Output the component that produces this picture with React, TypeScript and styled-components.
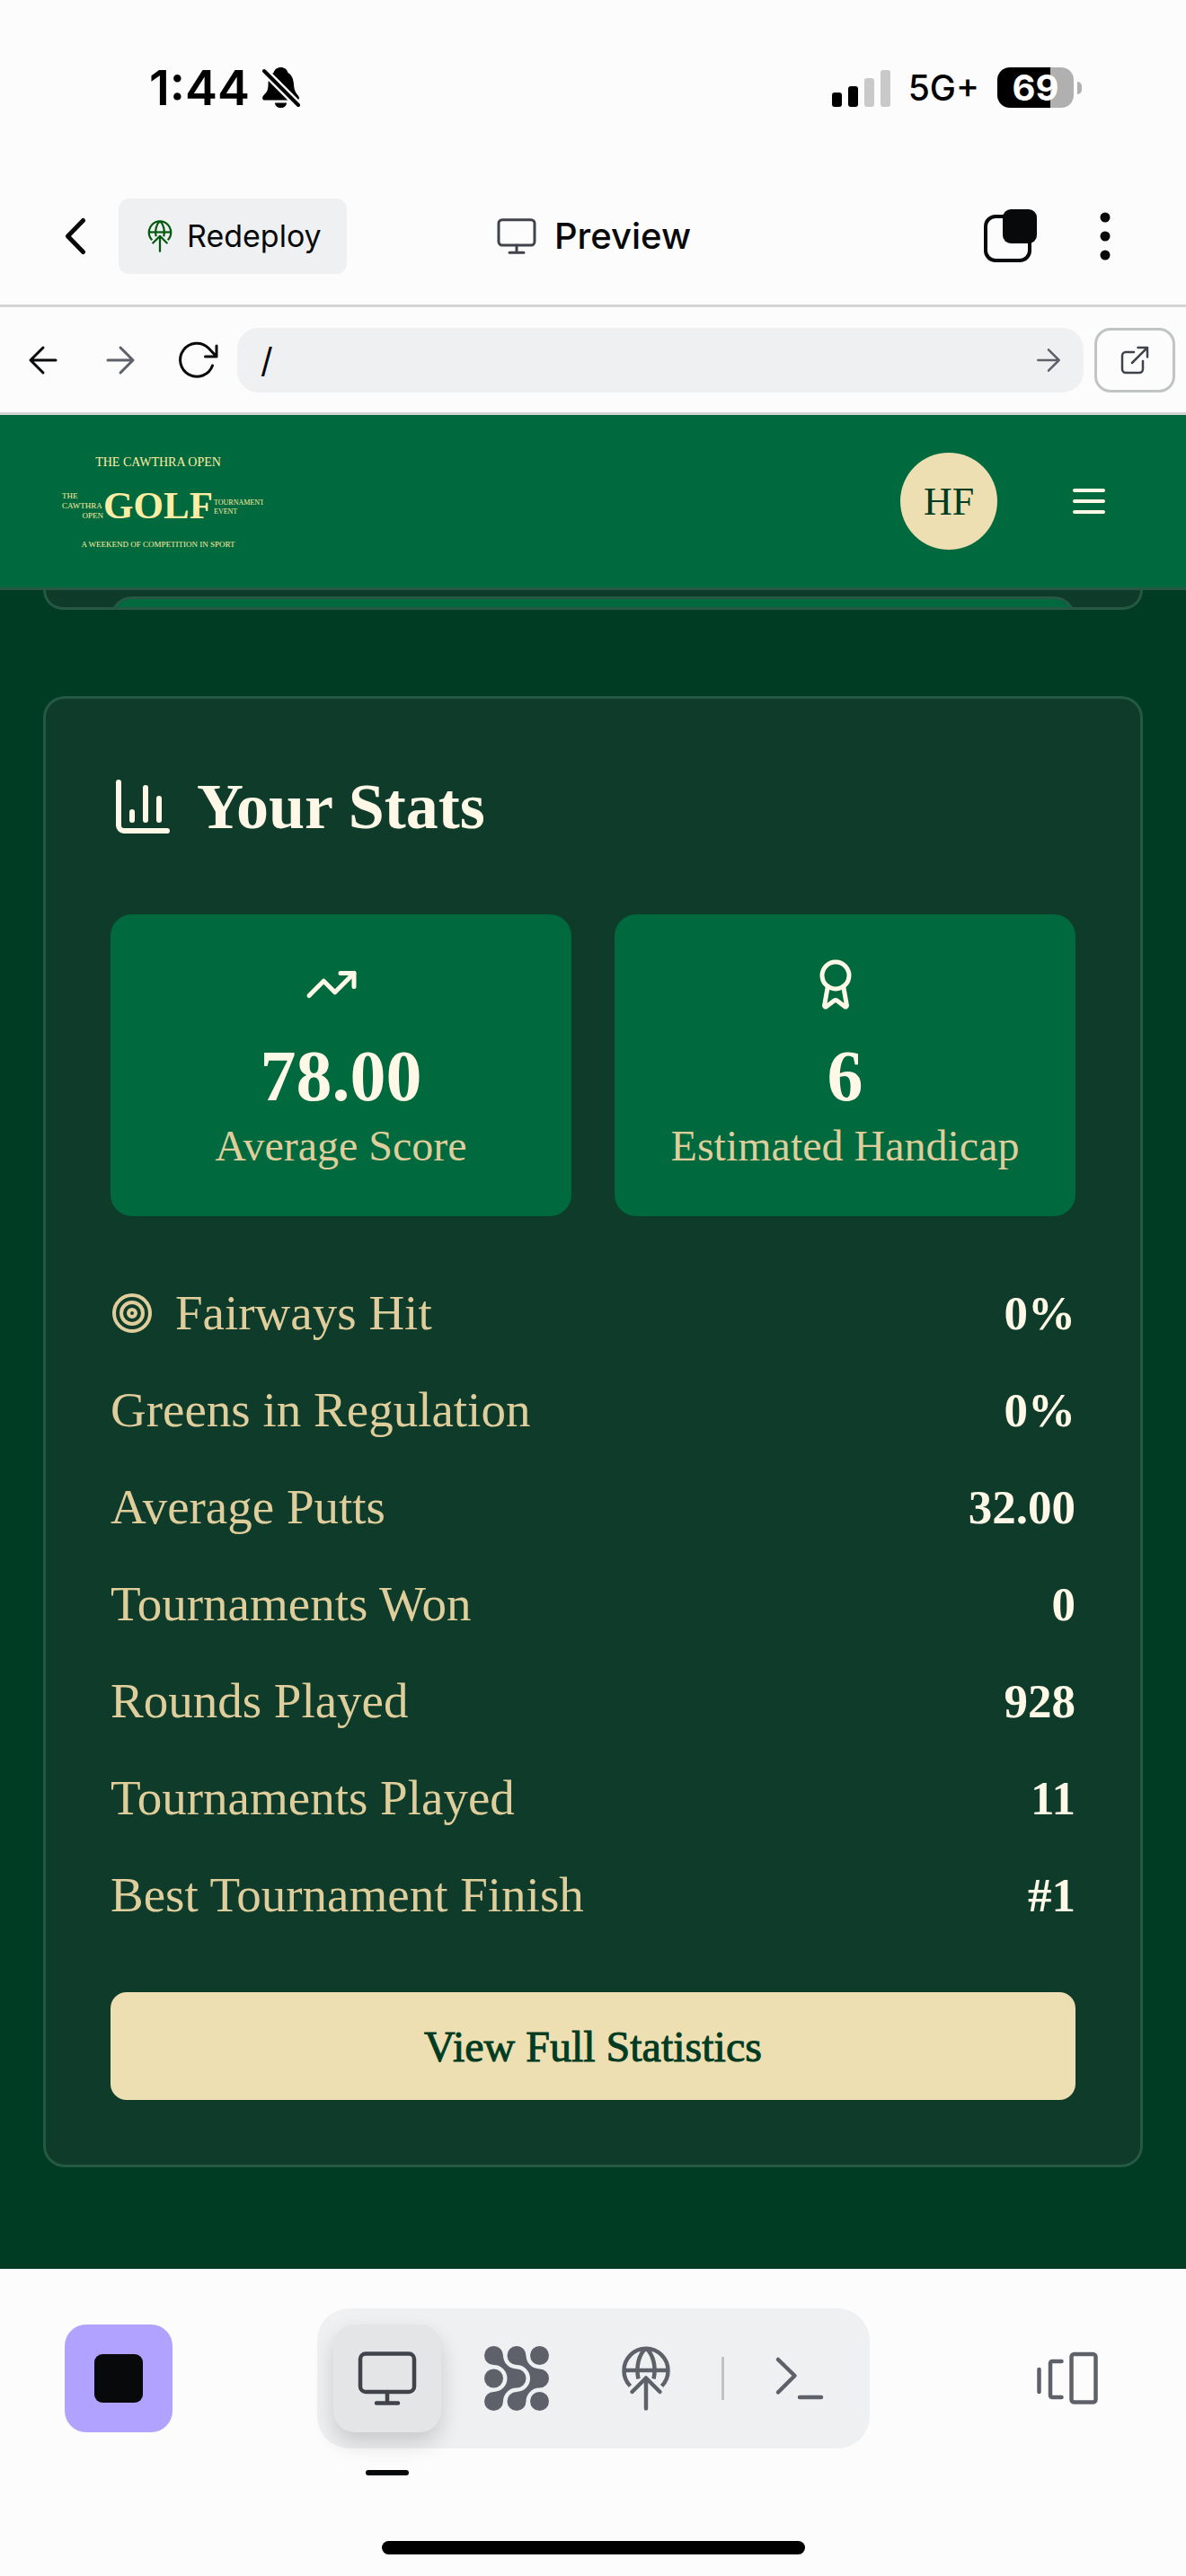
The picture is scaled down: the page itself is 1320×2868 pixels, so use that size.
import React from "react";
import styled, { createGlobalStyle } from "styled-components";
import { Award, ChartColumn, Target, TrendingUp } from "lucide-react";

const sans = `Inter, "Liberation Sans", sans-serif`;
const serif = `"Liberation Serif", "Times New Roman", serif`;

const color = {
  chrome: "#fcfcfc",
  chromeSoft: "#eff0f2",
  chromeLine: "#d3d4d4",
  ink: "#07090b",
  inkMid: "#41434a",
  inkSoft: "#5f616a",
  green: "#00693e",
  page: "#003c23",
  card: "#0f3c2a",
  line: "#255943",
  cream: "#fff8e7",
  sand: "#dfcd9b",
  gold: "#eedfb2",
};

const GlobalStyle = createGlobalStyle`
  *, *::before, *::after { box-sizing: border-box; }
  body { margin: 0; background: ${color.chrome}; }
  button, input { font: inherit; color: inherit; }
  svg { display: block; flex: none; }
`;

const Page = styled.div`
  display: flex;
  flex-direction: column;
  min-height: 100vh;
  font-family: ${sans};
  color: ${color.ink};
`;

/* ---------- phone status bar ---------- */

const StatusBar = styled.div`
  display: flex;
  justify-content: space-between;
  align-items: center;
  height: 187px;
  padding: 8px 116px 0 166px;
  color: #000;
`;

const StatusGroup = styled.div<{ $gap: number }>`
  display: flex;
  align-items: center;
  gap: ${(p) => p.$gap}px;
`;

const Clock = styled.span`
  font-size: 54px;
  font-weight: 600;
  line-height: 60px;
`;

const Network = styled.span`
  font-size: 39px;
  font-weight: 500;
  line-height: 60px;
`;

const Battery = styled.div`
  display: flex;
  align-items: center;
  gap: 4px;

  &::after {
    content: "";
    width: 5px;
    height: 14px;
    border-radius: 0 7px 7px 0;
    background: #b0b0b0;
  }
`;

const BatteryBody = styled.div`
  display: grid;
  place-items: center;
  width: 85px;
  height: 45px;
  border-radius: 14px;
  background: linear-gradient(90deg, #000 69%, #b0b0b0 69%);
  color: #fff;
  font-size: 40px;
  font-weight: 700;
  line-height: 45px;
`;

/* ---------- editor header ---------- */

const IconButton = styled.button<{ $w: number; $h: number }>`
  display: grid;
  place-items: center;
  width: ${(p) => p.$w}px;
  height: ${(p) => p.$h}px;
  padding: 0;
  border: 0;
  background: none;
  cursor: pointer;
`;

const EditorHeader = styled.header`
  display: grid;
  grid-template-columns: 1fr auto 1fr;
  align-items: center;
  height: 155px;
  padding: 0 54px;
  border-bottom: 3px solid ${color.chromeLine};
`;

const HeaderSide = styled.div<{ $end?: boolean; $gap: number }>`
  display: flex;
  align-items: center;
  justify-content: ${(p) => (p.$end ? "flex-end" : "flex-start")};
  gap: ${(p) => p.$gap}px;
`;

const RedeployButton = styled.button`
  display: flex;
  align-items: center;
  gap: 12px;
  height: 84px;
  padding: 0 28px;
  border: 0;
  border-radius: 12px;
  background: ${color.chromeSoft};
  font-size: 34px;
  line-height: 48px;
  cursor: pointer;
`;

const HeaderTitle = styled.h1`
  display: flex;
  align-items: center;
  gap: 18px;
  margin: 0;
  font-size: 40px;
  font-weight: 500;
  line-height: 48px;
`;

const AddressRow = styled.form`
  display: flex;
  align-items: center;
  gap: 2px;
  height: 120px;
  padding: 0 12px 0 6px;
  border-bottom: 3px solid ${color.chromeLine};
`;

const NavButtons = styled.div`
  display: flex;
  gap: 2px;
`;

const AddressField = styled.label`
  display: flex;
  flex: 1;
  align-items: center;
  min-width: 0;
  height: 72px;
  padding: 0 6px 0 26px;
  border-radius: 24px;
  background: ${color.chromeSoft};
`;

const AddressInput = styled.input`
  flex: 1;
  min-width: 0;
  padding: 0;
  border: 0;
  outline: 0;
  background: none;
  font-size: 38px;
  line-height: 48px;
`;

const OpenLink = styled.a`
  display: grid;
  place-items: center;
  width: 90px;
  height: 72px;
  margin-left: 10px;
  border: 3px solid #c0c4c3;
  border-radius: 18px;
  color: ${color.inkMid};
`;

/* ---------- previewed site ---------- */

const SiteHeader = styled.header`
  display: flex;
  align-items: center;
  justify-content: space-between;
  height: 195px;
  padding: 0 48px 0 69px;
  border-bottom: 3px solid ${color.line};
  background: ${color.green};
  color: ${color.cream};
`;

const SiteActions = styled.div`
  display: flex;
  align-items: center;
  gap: 42px;
`;

const Avatar = styled.button`
  width: 108px;
  height: 108px;
  padding: 0;
  border: 0;
  border-radius: 50%;
  background: ${color.gold};
  color: ${color.page};
  font-family: ${serif};
  font-size: 44px;
  cursor: pointer;
`;

const SiteMain = styled.main`
  display: flex;
  flex: 1;
  flex-direction: column;
  gap: 96px;
  padding: 0 48px 113px;
  background: ${color.page};
  font-family: ${serif};
`;

const PreviousCard = styled.section`
  height: 22px;
  padding: 7px 72px 0;
  overflow: hidden;
  border: 3px solid ${color.line};
  border-top: 0;
  border-radius: 0 0 24px 24px;
  background: ${color.card};
`;

const PreviousPanel = styled.div`
  height: 48px;
  border: 3px solid ${color.line};
  border-radius: 24px;
  background: ${color.green};
`;

const StatsCard = styled.section`
  display: flex;
  flex-direction: column;
  gap: 72px;
  padding: 72px;
  border: 3px solid ${color.line};
  border-radius: 24px;
  background: ${color.card};
  color: ${color.cream};
`;

const CardTitle = styled.h2`
  display: flex;
  align-items: center;
  gap: 24px;
  margin: 0;
  font-size: 72px;
  font-weight: 700;
  line-height: 96px;
`;

const Tiles = styled.div`
  display: grid;
  grid-template-columns: 1fr 1fr;
  gap: 48px;
`;

const Tile = styled.div`
  display: flex;
  flex-direction: column;
  align-items: center;
  padding: 48px;
  border-radius: 24px;
  background: ${color.green};
  white-space: nowrap;

  svg {
    margin: 0 21px 24px 0;
  }
`;

const TileValue = styled.strong`
  font-size: 80px;
  line-height: 96px;
`;

const TileLabel = styled.span`
  color: ${color.sand};
  font-size: 48px;
  line-height: 60px;
`;

const StatList = styled.dl`
  display: flex;
  flex-direction: column;
  gap: 36px;
  margin: 0;
  font-size: 55px;
  line-height: 72px;
`;

const StatRow = styled.div`
  display: flex;
  justify-content: space-between;
`;

const StatName = styled.dt`
  display: flex;
  align-items: center;
  gap: 24px;
  color: ${color.sand};
`;

const StatValue = styled.dd`
  margin: 0;
  font-size: 53px;
  font-weight: 700;
`;

const PrimaryButton = styled.button`
  height: 120px;
  border: 0;
  border-radius: 18px;
  background: ${color.gold};
  color: ${color.page};
  font-size: 48px;
  -webkit-text-stroke: 1px currentColor;
  cursor: pointer;
`;

/* ---------- editor dock ---------- */

const Dock = styled.footer`
  display: flex;
  flex-direction: column;
  align-items: center;
  gap: 103px;
  padding: 44px 72px 24px;
  background: ${color.chrome};
  color: ${color.inkSoft};
`;

const DockRow = styled.div`
  display: flex;
  align-items: center;
  justify-content: space-between;
  align-self: stretch;
`;

const StopButton = styled(IconButton)`
  border-radius: 24px;
  background: #b1a2ff;

  &::before {
    content: "";
    width: 54px;
    height: 54px;
    border-radius: 9px;
    background: ${color.ink};
  }
`;

const ToolTabs = styled.nav`
  display: flex;
  align-items: center;
  gap: 24px;
  padding: 18px;
  border-radius: 36px;
  background: ${color.chromeSoft};
`;

const ToolTab = styled(IconButton)<{ $active?: boolean }>`
  position: relative;
  border-radius: 24px;
  ${(p) =>
    p.$active &&
    `
    background: #e4e5e7;
    color: ${color.inkMid};
    box-shadow: 0 12px 24px rgba(0, 0, 0, 0.16);

    &::after {
      content: "";
      position: absolute;
      top: 162px;
      left: 36px;
      width: 48px;
      height: 6px;
      border-radius: 3px;
      background: ${color.ink};
    }
  `}
`;

const Divider = styled.span`
  width: 3px;
  height: 48px;
  background: #c0c2c5;
`;

const HomeIndicator = styled.div`
  width: 471px;
  height: 15px;
  border-radius: 8px;
  background: #000;
`;

/* ---------- icons ---------- */

type IconProps = { size: number; color?: string };

const line = {
  fill: "none",
  stroke: "currentColor",
  strokeLinecap: "round" as const,
  strokeLinejoin: "round" as const,
};

const BellOff = () => (
  <svg width="42" height="45" viewBox="0 0 42 45" aria-hidden="true">
    <path d="M20.500 0c-4 0-7 2.300-8 6-4.500 2.500-6 8-6 13 0 8-2.500 9-5 12-2.500 3-1.500 5.500 1.500 5.500h35c3 0 4-2.500 1.500-5.500-2.500-3-4-5-4.500-12-.5-6-2-10.500-6.500-13-1-3.700-4-6-8-6z" />
    <path d="M14 39.500h13c0 3.500-3 5.500-6.500 5.500s-6.500-2-6.500-5.500z" />
    <path d="M2 4l38 38" stroke={color.chrome} strokeWidth="9" />
    <path d="M2 4l38 38" stroke="#000" strokeWidth="4" strokeLinecap="round" />
  </svg>
);

const Signal = () => (
  <svg width="65" height="42" viewBox="0 0 65 42" aria-hidden="true">
    <rect x="0" y="26" width="11" height="16" rx="3" />
    <rect x="18" y="19" width="11" height="23" rx="3" />
    <rect x="36" y="10" width="11" height="32" rx="3" fill="#c9c9c9" />
    <rect x="54" y="1" width="11" height="41" rx="3" fill="#c9c9c9" />
  </svg>
);

const ChevronLeft = () => (
  <svg width="48" height="48" viewBox="0 0 48 48" {...line} strokeWidth="5">
    <path d="M32.500 6.500L15.500 24l17 17.500" />
  </svg>
);

const Globe = ({ size, color: c }: IconProps) => (
  <svg width={size} height={size} viewBox="0 0 72 72" {...line} strokeWidth="4.500" color={c}>
    <g strokeLinecap="butt">
      <path d="M18.500 44.500A24.500 24.500 0 1 1 53.500 44.500" />
      <path d="M11.500 27h49" />
      <path d="M36 2.500C28 9 24.500 23 27.500 36.500M36 2.500C44 9 47.500 23 44.500 36.500" />
    </g>
    <path d="M20.500 51L36 35.500L51.500 51M36 36v33.500" />
  </svg>
);

const Monitor = ({ size, color: c }: IconProps) => (
  <svg width={size} height={size} viewBox="0 0 72 72" {...line} strokeWidth="4.500" color={c}>
    <rect x="6" y="8.500" width="60" height="42.500" rx="6" />
    <path d="M36 51v12.500M24 63.500h24" />
  </svg>
);

const Tabs = () => (
  <svg width="60" height="60" viewBox="0 0 60 60">
    <rect x="2" y="8" width="49" height="49" rx="11" {...line} strokeWidth="4" />
    <rect x="21" y="0" width="38" height="38" rx="9" fill="currentColor" />
  </svg>
);

const Dots = () => (
  <svg width="12" height="54" viewBox="0 0 12 54" fill="currentColor">
    <circle cx="6" cy="6" r="5.500" />
    <circle cx="6" cy="27" r="5.500" />
    <circle cx="6" cy="48" r="5.500" />
  </svg>
);

const ArrowLeft = () => (
  <svg width="48" height="48" viewBox="0 0 48 48" {...line} strokeWidth="3">
    <path d="M38 24H10M24 10L10 24l14 14" />
  </svg>
);

const ArrowRight = ({ size, color: c }: IconProps) => (
  <svg width={size} height={size} viewBox="0 0 48 48" {...line} strokeWidth="3" color={c}>
    <path d="M10 24h28M24 10l14 14-14 14" />
  </svg>
);

const Reload = () => (
  <svg width="48" height="48" viewBox="0 0 48 48" {...line} strokeWidth="3">
    <path d="M40.500 30A18.500 18.500 0 1 1 36 10.500L45 20M45 8v12H32.500" />
  </svg>
);

const External = () => (
  <svg width="36" height="36" viewBox="0 0 36 36" {...line} strokeWidth="2.500">
    <path d="M17 9H8a4 4 0 0 0-4 4v15a4 4 0 0 0 4 4h15a4 4 0 0 0 4-4v-9M15 21L32 4M21.500 4H32v10.500" />
  </svg>
);

const MenuIcon = () => (
  <svg width="48" height="48" viewBox="0 0 24 24" {...line} strokeWidth="2">
    <path d="M4 6h16M4 12h16M4 18h16" />
  </svg>
);

const wave =
  "M10.500 0A10.500 10.500 0 0 1 21 10.500A15 15 0 0 0 36 25.500A10.500 10.500 0 0 1 36 46.500A15 15 0 0 0 21 61.500A10.500 10.500 0 1 1 10.500 51A15 15 0 0 0 10.500 21A10.500 10.500 0 0 1 10.500 0Z";

const Agent = () => (
  <svg width="72" height="72" viewBox="0 0 72 72" fill="currentColor">
    <path d={wave} />
    <path d={wave} transform="translate(25.500 0)" />
    <circle cx="10.500" cy="36" r="10.500" />
    <circle cx="61.500" cy="10.500" r="10.500" />
    <circle cx="61.500" cy="61.500" r="10.500" />
  </svg>
);

const Prompt = () => (
  <svg width="72" height="72" viewBox="0 0 72 72" {...line} strokeWidth="4.500">
    <path d="M12 15l18.500 18L12 51.500M36 57h24" />
  </svg>
);

const Panels = () => (
  <svg width="72" height="72" viewBox="0 0 72 72" {...line} strokeWidth="4.500">
    <path d="M4.500 26v25M29.500 17H19a2 2 0 0 0-2 2v36a2 2 0 0 0 2 2h10.500" />
    <rect x="40.500" y="9" width="27" height="53.500" rx="3" />
  </svg>
);

const Logo = () => (
  <svg
    width="224"
    height="106"
    viewBox="0 0 224 106"
    fill="#ffeda3"
    fontFamily={serif}
    role="img"
    aria-label="The Cawthra Open Golf Tournament Event"
  >
    <text x="107" y="14" fontSize="14" textAnchor="middle">THE CAWTHRA OPEN</text>
    <text x="107" y="72" fontSize="43" fontWeight="700" textAnchor="middle">GOLF</text>
    <text x="0" y="50" fontSize="9">THE</text>
    <text x="0" y="61" fontSize="9">CAWTHRA</text>
    <text x="46" y="72" fontSize="9" textAnchor="end">OPEN</text>
    <text x="169" y="57" fontSize="8">TOURNAMENT</text>
    <text x="169" y="67" fontSize="8">EVENT</text>
    <text x="107" y="104" fontSize="9" textAnchor="middle">A WEEKEND OF COMPETITION IN SPORT</text>
  </svg>
);

/* ---------- data ---------- */

const stats = [
  { name: "Fairways Hit", value: "0%", icon: true },
  { name: "Greens in Regulation", value: "0%" },
  { name: "Average Putts", value: "32.00" },
  { name: "Tournaments Won", value: "0" },
  { name: "Rounds Played", value: "928" },
  { name: "Tournaments Played", value: "11" },
  { name: "Best Tournament Finish", value: "#1" },
];

export default function App() {
  return (
    <Page>
      <GlobalStyle />

      <StatusBar>
        <StatusGroup $gap={14}>
          <Clock>1:44</Clock>
          <BellOff />
        </StatusGroup>
        <StatusGroup $gap={20}>
          <Signal />
          <Network>5G+</Network>
          <Battery>
            <BatteryBody>69</BatteryBody>
          </Battery>
        </StatusGroup>
      </StatusBar>

      <EditorHeader>
        <HeaderSide $gap={18}>
          <IconButton $w={60} $h={84} aria-label="Back">
            <ChevronLeft />
          </IconButton>
          <RedeployButton>
            <Globe size={36} color="#04590f" />
            Redeploy
          </RedeployButton>
        </HeaderSide>
        <HeaderTitle>
          <Monitor size={48} color={color.inkMid} />
          Preview
        </HeaderTitle>
        <HeaderSide $end $gap={33}>
          <IconButton $w={72} $h={84} aria-label="Tabs">
            <Tabs />
          </IconButton>
          <IconButton $w={72} $h={84} aria-label="More">
            <Dots />
          </IconButton>
        </HeaderSide>
      </EditorHeader>

      <AddressRow onSubmit={(e) => e.preventDefault()}>
        <NavButtons>
          <IconButton type="button" $w={84} $h={72} aria-label="Go back">
            <ArrowLeft />
          </IconButton>
          <IconButton type="button" $w={84} $h={72} aria-label="Go forward">
            <ArrowRight size={48} color={color.inkSoft} />
          </IconButton>
          <IconButton type="button" $w={84} $h={72} aria-label="Reload">
            <Reload />
          </IconButton>
        </NavButtons>
        <AddressField>
          <AddressInput aria-label="Path" defaultValue="/" />
          <IconButton $w={66} $h={72} aria-label="Go">
            <ArrowRight size={40} color={color.inkSoft} />
          </IconButton>
        </AddressField>
        <OpenLink href="#" aria-label="Open in new tab">
          <External />
        </OpenLink>
      </AddressRow>

      <SiteHeader>
        <Logo />
        <SiteActions>
          <Avatar>HF</Avatar>
          <IconButton $w={120} $h={120} aria-label="Menu">
            <MenuIcon />
          </IconButton>
        </SiteActions>
      </SiteHeader>

      <SiteMain>
        <PreviousCard>
          <PreviousPanel />
        </PreviousCard>

        <StatsCard>
          <CardTitle>
            <ChartColumn size={72} />
            Your Stats
          </CardTitle>

          <Tiles>
            <Tile>
              <TrendingUp size={60} />
              <TileValue>78.00</TileValue>
              <TileLabel>Average Score</TileLabel>
            </Tile>
            <Tile>
              <Award size={60} />
              <TileValue>6</TileValue>
              <TileLabel>Estimated Handicap</TileLabel>
            </Tile>
          </Tiles>

          <StatList>
            {stats.map((s) => (
              <StatRow key={s.name}>
                <StatName>
                  {s.icon && <Target size={48} />}
                  {s.name}
                </StatName>
                <StatValue>{s.value}</StatValue>
              </StatRow>
            ))}
          </StatList>

          <PrimaryButton>View Full Statistics</PrimaryButton>
        </StatsCard>
      </SiteMain>

      <Dock>
        <DockRow>
          <StopButton $w={120} $h={120} aria-label="Stop" />
          <ToolTabs>
            <ToolTab $active $w={120} $h={120} aria-label="Preview">
              <Monitor size={72} />
            </ToolTab>
            <ToolTab $w={120} $h={120} aria-label="Agent">
              <Agent />
            </ToolTab>
            <ToolTab $w={120} $h={120} aria-label="Deploy">
              <Globe size={72} />
            </ToolTab>
            <Divider />
            <ToolTab $w={120} $h={120} aria-label="Console">
              <Prompt />
            </ToolTab>
          </ToolTabs>
          <IconButton $w={120} $h={120} aria-label="Switch panel">
            <Panels />
          </IconButton>
        </DockRow>
        <HomeIndicator />
      </Dock>
    </Page>
  );
}
